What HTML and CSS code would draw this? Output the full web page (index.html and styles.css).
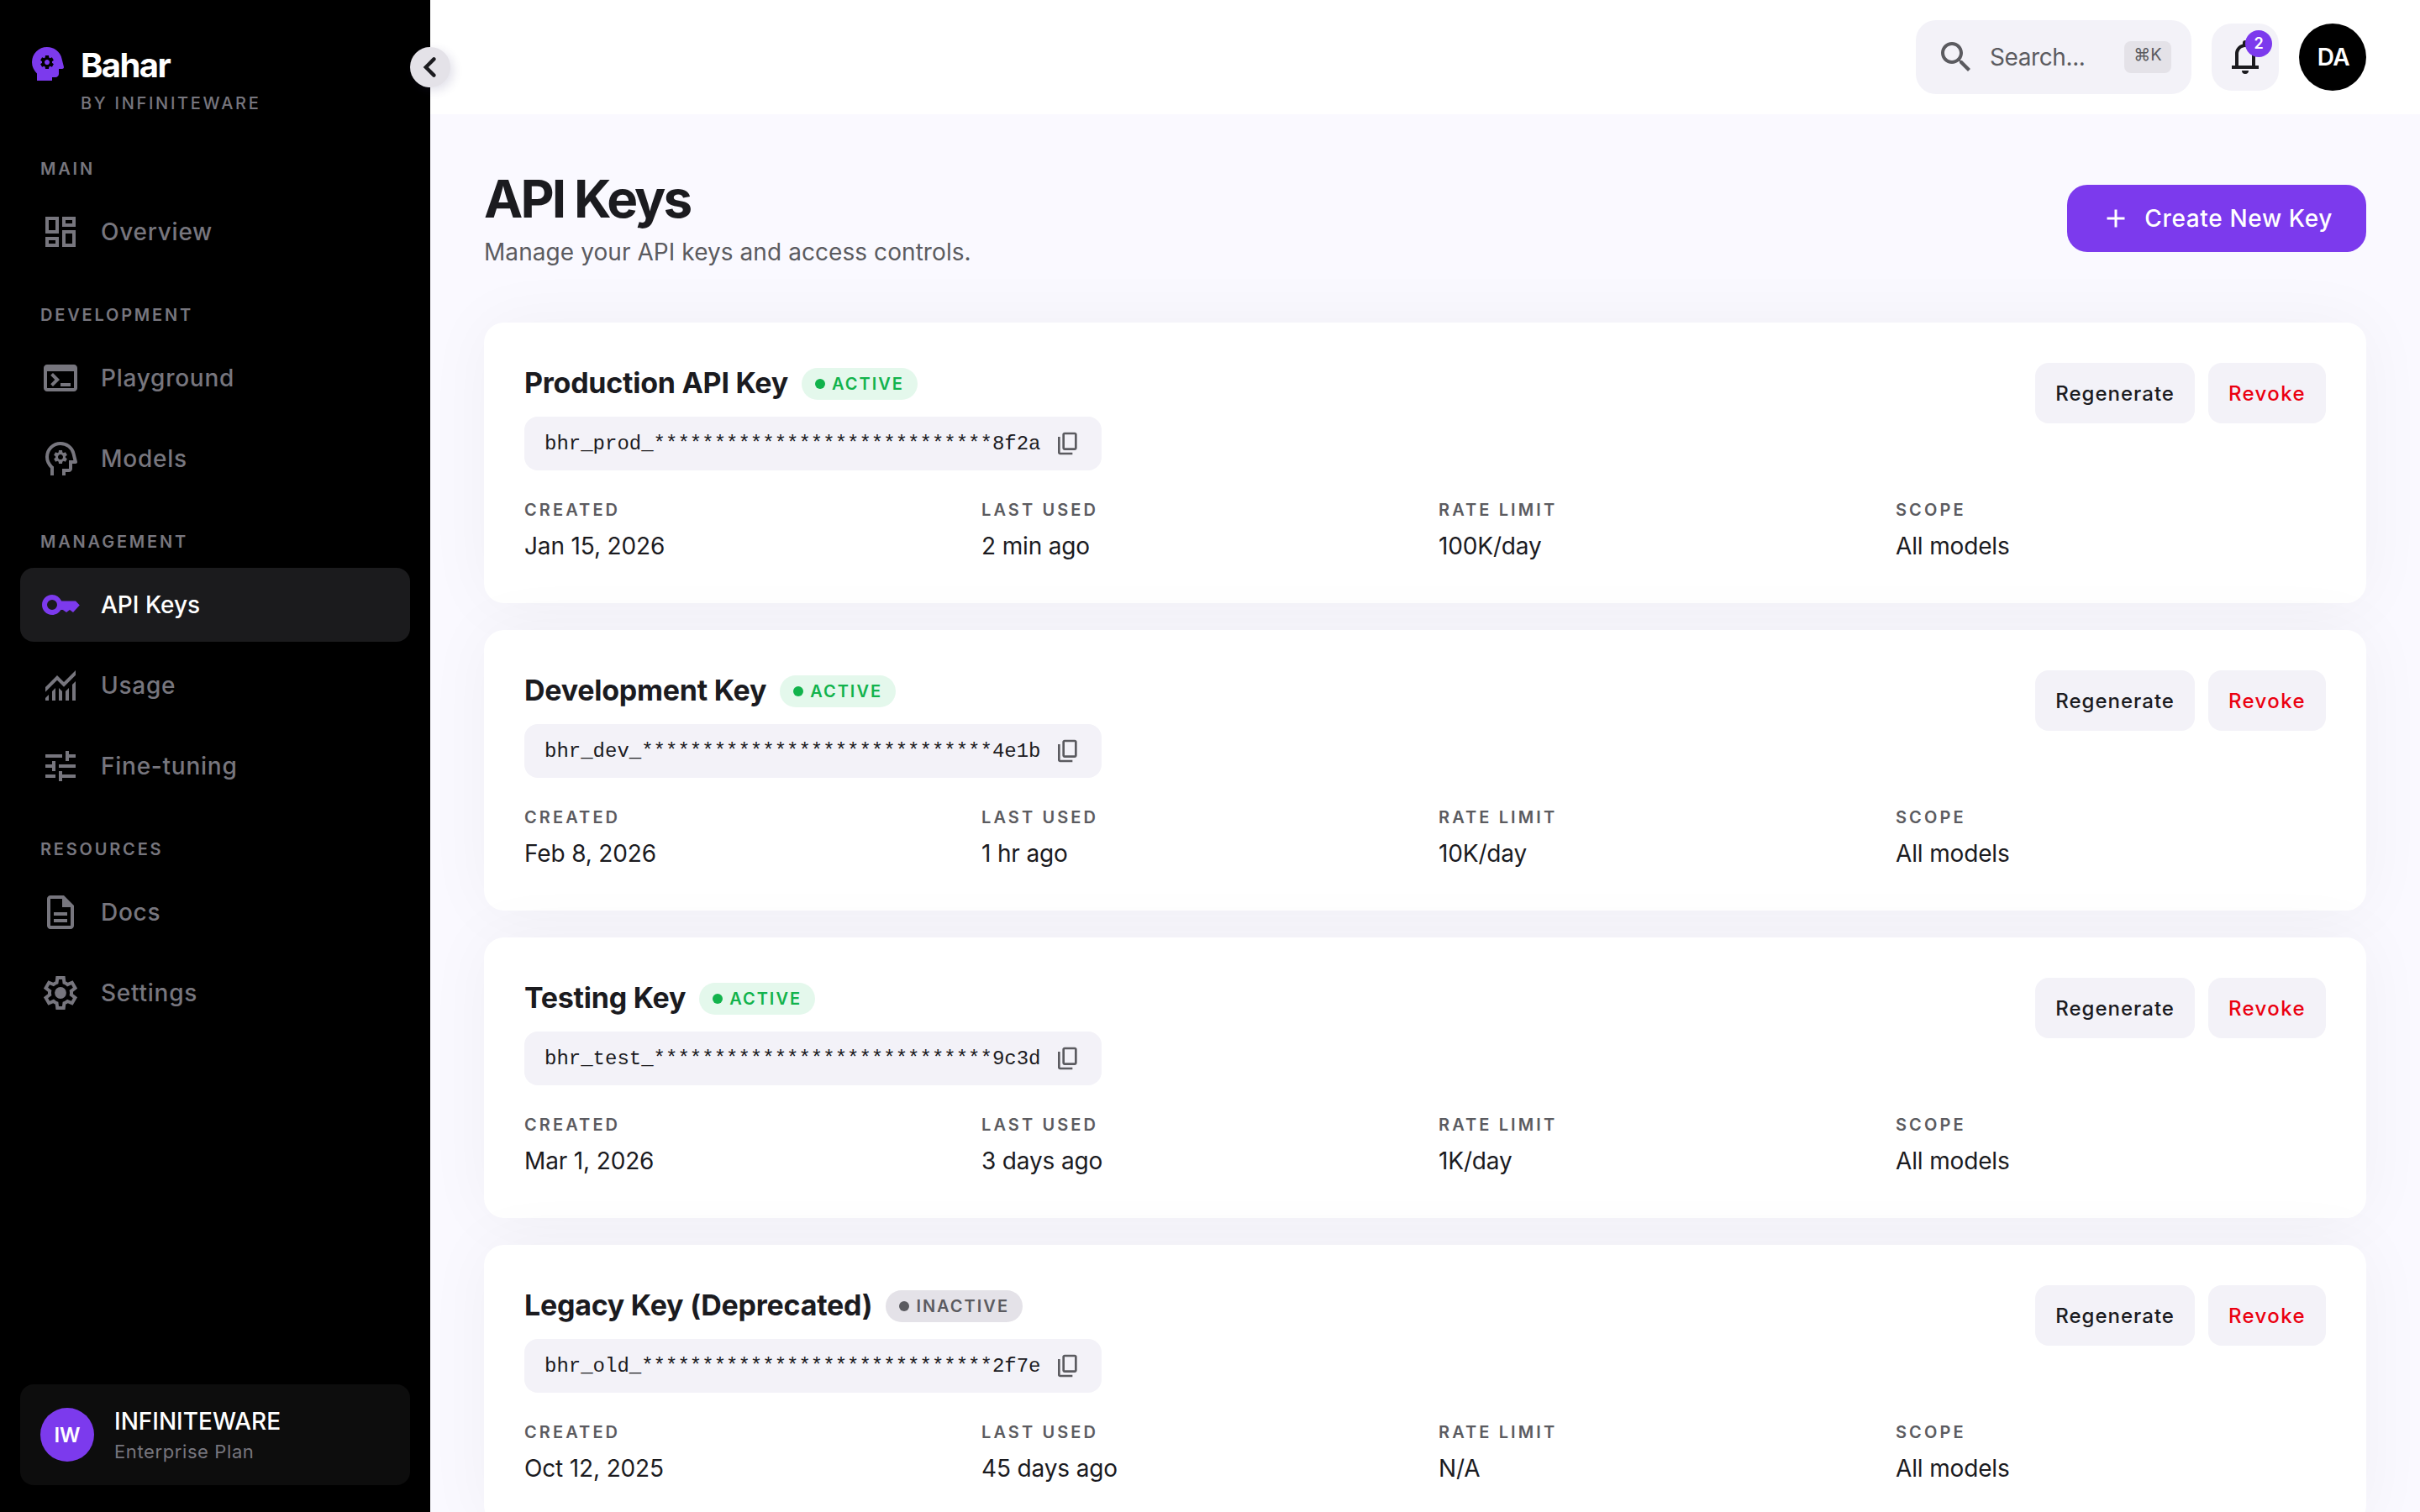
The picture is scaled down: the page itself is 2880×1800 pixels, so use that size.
FILE: index.html
```html
<!DOCTYPE html>
<html lang="en">
<head>
	<meta charset="UTF-8">
	<meta name="viewport" content="width=device-width, initial-scale=1.0">
	<title>Bahar - API Keys</title>
	<link rel="stylesheet" href="styles.css">
</head>

<body>

	<!-- Icon sprite -->
	<svg class="sprite" xmlns="http://www.w3.org/2000/svg">
		<symbol id="icon-brain" viewBox="0 -960 960 960"><path fill-rule="evenodd" d="M240-80v-172q-57-52-88.500-121.500T120-520q0-150 105-255t255-105q125 0 221.500 73.500T827-615l52 205q5 19-7 34.500T840-360h-80v120q0 33-23.500 56.500T680-160h-80v80H240ZM440-360h80l6-50q8-3 14.500-7t11.500-9l46 20 40-68-40-30q2-8 2-16t-2-16l40-30-40-68-46 20q-5-5-11.500-9t-14.500-7l-6-50h-80l-6 50q-8 3-14.500 7t-11.500 9l-46-20-40 68 40 30q-2 8-2 16t2 16l-40 30 40 68 46-20q5 5 11.500 9t14.500 7l6 50Zm40-100q-25 0-42.500-17.500T420-520q0-25 17.500-42.500T480-580q25 0 42.500 17.500T540-520q0 25-17.500 42.500T480-460Z"/></symbol>
		<symbol id="icon-dashboard" viewBox="0 0 24 24"><path d="M19 5v2h-4V5h4M9 5v6H5V5h4m10 8v6h-4v-6h4M9 17v2H5v-2h4M21 3h-8v6h8V3zM11 3H3v10h8V3zm10 8h-8v10h8V11zm-10 4H3v6h8v-6z"/></symbol>
		<symbol id="icon-terminal" viewBox="0 0 24 24"><path d="M20 4H4c-1.110 0-2 .9-2 2v12c0 1.100.89 2 2 2h16c1.100 0 2-.9 2-2V6c0-1.100-.89-2-2-2zm0 14H4V8h16v10zm-2-1h-6v-2h6v2zM7.500 17l-1.410-1.410L8.670 13l-2.590-2.590L7.500 9l4 4-4 4z"/></symbol>
		<symbol id="icon-head" viewBox="0 -960 960 960"><path d="M240-80v-172q-57-52-88.500-121.500T120-520q0-150 105-255t255-105q125 0 221.500 73.500T827-615l52 205q5 19-7 34.500T840-360h-80v120q0 33-23.500 56.500T680-160h-80v80h-80v-160h160v-200h108l-38-155q-23-91-98-148t-172-57q-116 0-198 81t-82 197q0 60 24.500 114t69.500 96l26 24v208h-80Z"/><path d="M440-360h80l6-50q8-3 14.500-7t11.500-9l46 20 40-68-40-30q2-8 2-16t-2-16l40-30-40-68-46 20q-5-5-11.500-9t-14.500-7l-6-50h-80l-6 50q-8 3-14.500 7t-11.500 9l-46-20-40 68 40 30q-2 8-2 16t2 16l-40 30 40 68 46-20q5 5 11.500 9t14.500 7l6 50Zm40-100q-25 0-42.500-17.500T420-520q0-25 17.500-42.500T480-580q25 0 42.500 17.500T540-520q0 25-17.500 42.500T480-460Z" fill-rule="evenodd"/></symbol>
		<symbol id="icon-key" viewBox="0 0 24 24"><path fill-rule="evenodd" d="M7 6C3.700 6 1 8.700 1 12s2.700 6 6 6c2.200 0 4.100-1.100 5.200-3h1.200l2.100 1.500 2-1.500 2 1.500L23.400 12.200 21 9.800h-8.400C11.500 7.500 9.400 6 7 6zm0 3a3 3 0 1 1 0 6 3 3 0 0 1 0-6z"/></symbol>
		<symbol id="icon-chart" viewBox="0 0 24 24"><path d="M3 21v-1.500l2-2V21H3zm4 0v-5.500l2-2V21H7zm4 0v-7.500l2 2.030V21h-2zm4 0v-5.480l2-2V21h-2zm4 0V11.500l2-2V21h-2zM3 15.830V13l7-7 4 4 7-7v2.830l-7 7-4-4-7 7z"/></symbol>
		<symbol id="icon-tune" viewBox="0 0 24 24"><path d="M3 17v2h6v-2H3zM3 5v2h10V5H3zm10 16v-2h8v-2h-8v-2h-2v6h2zM7 9v2H3v2h4v2h2V9H7zm14 4v-2H11v2h10zm-6-4h2V7h4V5h-4V3h-2v6z"/></symbol>
		<symbol id="icon-doc" viewBox="0 0 24 24"><path d="M8 16h8v2H8zm0-4h8v2H8zm6-10H6c-1.100 0-2 .9-2 2v16c0 1.100.89 2 1.990 2H18c1.100 0 2-.9 2-2V8l-6-6zm4 18H6V4h7v5h5v11z"/></symbol>
		<symbol id="icon-gear" viewBox="0 -960 960 960"><path d="m370-80-16-128q-13-5-24.500-12T307-235l-119 50L78-375l103-78q-1-7-1-13.500v-27q0-6.500 1-13.500L78-585l110-190 119 50q11-8 23-15t24-12l16-128h220l16 128q13 5 24.500 12t22.500 15l119-50 110 190-103 78q1 7 1 13.500v27q0 6.500-2 13.500l103 78-110 190-118-50q-11 8-23 15t-24 12L590-80H370Zm70-80h79l14-106q31-8 57.500-23.500T639-327l99 41 39-68-86-65q5-14 7-29.500t2-31.500q0-16-2-31.500t-7-29.500l86-65-39-68-99 42q-22-23-48.500-38.500T533-694l-13-106h-79l-14 106q-31 8-57.500 23.500T321-633l-99-41-39 68 86 64q-5 15-7 30t-2 32q0 16 2 31t7 30l-86 65 39 68 99-42q22 23 48.500 38.500T427-266l13 106Z" fill-rule="evenodd"/><circle cx="480" cy="-480" r="138"/></symbol>
		<symbol id="icon-chevron" viewBox="0 0 24 24"><path d="M14.200 7.200L9.400 12l4.800 4.800" fill="none" stroke="currentColor" stroke-width="2.200" stroke-linecap="round"/></symbol>
		<symbol id="icon-search" viewBox="0 0 24 24"><path d="M15.500 14h-.79l-.28-.27C15.410 12.590 16 11.110 16 9.500 16 5.910 13.090 3 9.500 3S3 5.910 3 9.500 5.910 16 9.500 16c1.610 0 3.090-.59 4.230-1.570l.27.28v.79l5 4.990L20.490 19l-4.990-5zm-6 0C7.010 14 5 11.990 5 9.500S7.010 5 9.500 5 14 7.010 14 9.500 11.990 14 9.500 14z"/></symbol>
		<symbol id="icon-bell" viewBox="0 0 24 24"><path d="M4 19v-2h2v-7c0-2.780 1.900-5.160 4.500-5.800v-.7a1.500 1.500 0 0 1 3 0v.7c2.600.64 4.500 3.020 4.500 5.800v7h2v2H4zm8 3a2 2 0 0 1-2-2h4a2 2 0 0 1-2 2zm-4-5h8v-7c0-2.200-1.800-4-4-4s-4 1.800-4 4v7z" fill-rule="evenodd"/></symbol>
		<symbol id="icon-plus" viewBox="0 0 24 24"><path d="M12 5v14M5 12h14" fill="none" stroke="currentColor" stroke-width="2"/></symbol>
		<symbol id="icon-copy" viewBox="0 0 24 24"><path d="M9 18c-.55 0-1.020-.2-1.410-.59C7.200 17.020 7 16.550 7 16V4c0-.55.2-1.020.59-1.410C7.980 2.200 8.450 2 9 2h9c.55 0 1.020.2 1.410.59.39.39.59.86.59 1.410v12c0 .55-.2 1.020-.59 1.410-.39.39-.86.59-1.410.59H9zm0-2h9V4H9v12zm-4 6c-.55 0-1.020-.2-1.410-.59C3.200 21.020 3 20.550 3 20V6h2v14h11v2H5z"/></symbol>
	</svg>

	<!-- Sidebar -->
	<aside class="sidebar">
		<button class="collapse-btn"><svg class="icon"><use href="#icon-chevron"/></svg></button>

		<div class="brand">
			<svg class="icon brand-icon"><use href="#icon-brain"/></svg>
			<div class="brand-name">Bahar</div>
		</div>
		<div class="brand-sub">BY INFINITEWARE</div>

		<nav class="nav">
			<div class="nav-section">
				<div class="nav-label">MAIN</div>
				<a class="nav-item"><svg class="icon"><use href="#icon-dashboard"/></svg><span>Overview</span></a>
			</div>
			<div class="nav-section">
				<div class="nav-label">DEVELOPMENT</div>
				<a class="nav-item"><svg class="icon"><use href="#icon-terminal"/></svg><span>Playground</span></a>
				<a class="nav-item"><svg class="icon"><use href="#icon-head"/></svg><span>Models</span></a>
			</div>
			<div class="nav-section">
				<div class="nav-label">MANAGEMENT</div>
				<a class="nav-item active"><svg class="icon"><use href="#icon-key"/></svg><span>API Keys</span></a>
				<a class="nav-item"><svg class="icon"><use href="#icon-chart"/></svg><span>Usage</span></a>
				<a class="nav-item"><svg class="icon"><use href="#icon-tune"/></svg><span>Fine-tuning</span></a>
			</div>
			<div class="nav-section">
				<div class="nav-label">RESOURCES</div>
				<a class="nav-item"><svg class="icon"><use href="#icon-doc"/></svg><span>Docs</span></a>
				<a class="nav-item"><svg class="icon"><use href="#icon-gear"/></svg><span>Settings</span></a>
			</div>
		</nav>

		<div class="org">
			<div class="org-avatar">IW</div>
			<div>
				<div class="org-name">INFINITEWARE</div>
				<div class="org-plan">Enterprise Plan</div>
			</div>
		</div>
	</aside>

	<!-- Main column -->
	<div class="main">
		<header class="topbar">
			<div class="search">
				<svg class="icon"><use href="#icon-search"/></svg>
				<span class="search-text">Search...</span>
				<kbd>⌘K</kbd>
			</div>
			<button class="bell">
				<svg class="icon"><use href="#icon-bell"/></svg>
				<span class="bell-badge">2</span>
			</button>
			<div class="user">DA</div>
		</header>

		<main class="content">
			<div class="page-head">
				<div>
					<h1>API Keys</h1>
					<p>Manage your API keys and access controls.</p>
				</div>
				<button class="create-btn"><svg class="plus"><use href="#icon-plus"/></svg><span>Create New Key</span></button>
			</div>

			<div class="keys" id="keys"></div>
		</main>
	</div>

	<script src="script.js"></script>
</body>
</html>
```

FILE: styles.css
```css
/* Global Styles */
* {
	box-sizing: border-box;
}

body {
	margin: 0;
	display: flex;
	height: 100vh;
	overflow: hidden;
	background: #faf9ff;
	color: #1b1b1f;
	font-family: Inter, "Liberation Sans", sans-serif;
	font-size: 28px;
}

button {
	border: none;
	font-family: inherit;
	padding: 0;
}

h1, h2, p {
	margin: 0;
}

svg {
	fill: currentColor;
	flex: none;
}

.sprite {
	display: none;
}

.icon {
	width: 48px;
	height: 48px;
}

/* Sidebar */
.sidebar {
	position: relative;
	z-index: 2;
	flex: 0 0 512px;
	display: flex;
	flex-direction: column;
	padding: 48px 24px 32px;
	background: #000;
	color: #77767e;
}

.collapse-btn {
	position: absolute;
	top: 56px;
	right: -24px;
	width: 48px;
	height: 48px;
	border-radius: 50%;
	background: #e4e2e8;
	color: #1b1b1f;
	box-shadow: 4px 4px 12px rgba(60, 50, 110, 0.14);
}

.brand {
	display: flex;
	align-items: center;
	height: 56px;
	padding-left: 8px;
}

.brand-icon {
	color: #7c3aed;
}

.brand-name {
	margin-left: 16px;
	padding-top: 2px;
	font-size: 40px;
	font-weight: 700;
	letter-spacing: -1.6px;
	color: #fff;
}

.brand-sub {
	height: 38px;
	padding-left: 72px;
	line-height: 39px;
	font-size: 20px;
	font-weight: 500;
	letter-spacing: 2.7px;
}

.nav {
	flex: 1;
	padding-top: 44px;
}

.nav-section {
	display: flex;
	flex-direction: column;
	gap: 8px;
	margin-bottom: 40px;
}

.nav-label {
	height: 38px;
	padding-left: 24px;
	line-height: 30px;
	font-size: 20px;
	font-weight: 600;
	letter-spacing: 2.8px;
}

.nav-item {
	display: flex;
	align-items: center;
	gap: 24px;
	height: 88px;
	padding: 0 24px;
	border-radius: 16px;
	font-weight: 500;
	letter-spacing: 0.75px;
}

.nav-item.active {
	background: #1b1b1d;
	color: #fff;
	letter-spacing: 0;
}

.nav-item.active .icon {
	color: #7c3aed;
}

.org {
	display: flex;
	align-items: center;
	gap: 24px;
	height: 120px;
	padding: 0 24px;
	border-radius: 16px;
	background: #0d0d0d;
}

.org-avatar {
	display: flex;
	align-items: center;
	justify-content: center;
	width: 64px;
	height: 64px;
	border-radius: 50%;
	background: #7c3aed;
	color: #fff;
	font-size: 24px;
	font-weight: 600;
}

.org-name {
	line-height: 40px;
	font-weight: 500;
	color: #fff;
}

.org-plan {
	line-height: 32px;
	font-size: 22px;
	letter-spacing: 0.6px;
}

/* Top bar */
.main {
	flex: 1;
	min-width: 0;
}

.topbar {
	display: flex;
	align-items: center;
	justify-content: flex-end;
	gap: 24px;
	height: 136px;
	padding: 0 64px;
	background: #fff;
}

.search {
	display: flex;
	align-items: center;
	gap: 16px;
	width: 328px;
	height: 88px;
	padding: 0 24px;
	border-radius: 24px;
	background: #f3f2f8;
	color: #5b5b60;
}

.search-text {
	flex: 1;
	letter-spacing: -0.4px;
}

kbd {
	width: 56px;
	height: 38px;
	border-radius: 8px;
	background: #e4e2e8;
	text-align: center;
	line-height: 32px;
	font-family: inherit;
	font-size: 20px;
}

.bell {
	position: relative;
	display: flex;
	align-items: center;
	justify-content: center;
	width: 80px;
	height: 80px;
	border-radius: 24px;
	background: #f3f2f8;
	color: #1b1b1f;
}

.bell-badge {
	position: absolute;
	top: 8px;
	right: 8px;
	width: 32px;
	height: 32px;
	border-radius: 50%;
	background: #7c3aed;
	color: #fff;
	line-height: 32px;
	font-size: 18px;
	font-weight: 600;
}

.user {
	width: 80px;
	height: 80px;
	border-radius: 50%;
	background: #000;
	color: #fff;
	text-align: center;
	text-indent: 2px;
	line-height: 80px;
	font-weight: 600;
	letter-spacing: -0.5px;
}

/* Page heading */
.content {
	padding: 64px;
}

.page-head {
	display: flex;
	align-items: center;
	justify-content: space-between;
	height: 120px;
	margin-bottom: 64px;
}

h1 {
	line-height: 76px;
	font-size: 62px;
	font-weight: 700;
	letter-spacing: -2.9px;
}

.page-head p {
	margin-top: 3px;
	line-height: 44px;
	color: #5b5b60;
	letter-spacing: 0.07px;
}

.create-btn {
	display: flex;
	align-items: center;
	gap: 16px;
	height: 80px;
	padding: 0 40px;
	border-radius: 24px;
	background: #7c3aed;
	color: #fff;
	font-size: 28px;
	font-weight: 500;
	letter-spacing: 0.65px;
}

.plus {
	width: 36px;
	height: 36px;
}

/* Key cards */
.keys {
	display: flex;
	flex-direction: column;
	gap: 32px;
}

.card {
	height: 334px;
	padding: 48px;
	border-radius: 24px;
	background: #fff;
	box-shadow: 0 0 80px rgba(27, 27, 31, 0.045);
}

.card-top {
	display: flex;
	align-items: flex-start;
	justify-content: space-between;
	height: 128px;
}

.card-title {
	display: flex;
	align-items: center;
	gap: 16px;
	height: 48px;
	margin-bottom: 16px;
}

h2 {
	margin-top: -2px;
	font-size: 34px;
	font-weight: 700;
	letter-spacing: -0.25px;
}

.status {
	display: flex;
	align-items: center;
	gap: 8px;
	height: 38px;
	margin-top: 2px;
	padding: 0 16px;
	border-radius: 19px;
	background: #e4e2e8;
	color: #5b5b60;
	font-size: 20px;
	font-weight: 600;
	letter-spacing: 2px;
}

.status::before {
	content: "";
	width: 12px;
	height: 12px;
	border-radius: 50%;
	background: currentColor;
}

.status.active {
	background: #e4f8ec;
	color: #12b34c;
}

.key-value {
	display: inline-flex;
	align-items: center;
	gap: 16px;
	height: 64px;
	padding: 0 24px;
	border-radius: 16px;
	background: #f3f2f8;
	font-family: "Liberation Mono", monospace;
	font-size: 24px;
}

.key-value svg {
	width: 32px;
	height: 32px;
	color: #5b5b60;
}

.actions {
	display: flex;
	gap: 16px;
}

.actions button {
	height: 72px;
	padding: 0 24px;
	border-radius: 16px;
	background: #f3f2f8;
	color: #1b1b1f;
	font-size: 24px;
	font-weight: 500;
	letter-spacing: 1px;
}

.actions .revoke {
	color: #eb0010;
	letter-spacing: 1.4px;
}

.meta {
	display: grid;
	grid-template-columns: repeat(4, 1fr);
	gap: 32px;
	padding-top: 32px;
}

.meta-label {
	line-height: 30px;
	margin-bottom: 8px;
	font-size: 20px;
	font-weight: 600;
	letter-spacing: 3.1px;
	color: #5b5b60;
}

.meta-value {
	line-height: 40px;
	letter-spacing: -0.15px;
}
```

FILE: script.js
```js
const keys = [
	{ name: "Production API Key", value: "bhr_prod_****************************8f2a", status: "active", created: "Jan 15, 2026", used: "2 min ago", limit: "100K/day", scope: "All models" },
	{ name: "Development Key", value: "bhr_dev_*****************************4e1b", status: "active", created: "Feb 8, 2026", used: "1 hr ago", limit: "10K/day", scope: "All models" },
	{ name: "Testing Key", value: "bhr_test_****************************9c3d", status: "active", created: "Mar 1, 2026", used: "3 days ago", limit: "1K/day", scope: "All models" },
	{ name: "Legacy Key (Deprecated)", value: "bhr_old_*****************************2f7e", status: "inactive", created: "Oct 12, 2025", used: "45 days ago", limit: "N/A", scope: "All models" }
];

function metaItem(label, value) {
	return `<div><div class="meta-label">${label}</div><div class="meta-value">${value}</div></div>`;
}

// Render one card per key
document.getElementById("keys").innerHTML = keys.map(key => `
	<section class="card">
		<div class="card-top">
			<div>
				<div class="card-title">
					<h2>${key.name}</h2>
					<span class="status ${key.status}">${key.status.toUpperCase()}</span>
				</div>
				<div class="key-value">${key.value}<svg><use href="#icon-copy"/></svg></div>
			</div>
			<div class="actions">
				<button>Regenerate</button>
				<button class="revoke">Revoke</button>
			</div>
		</div>
		<div class="meta">
			${metaItem("CREATED", key.created)}
			${metaItem("LAST USED", key.used)}
			${metaItem("RATE LIMIT", key.limit)}
			${metaItem("SCOPE", key.scope)}
		</div>
	</section>
`).join("");
```
